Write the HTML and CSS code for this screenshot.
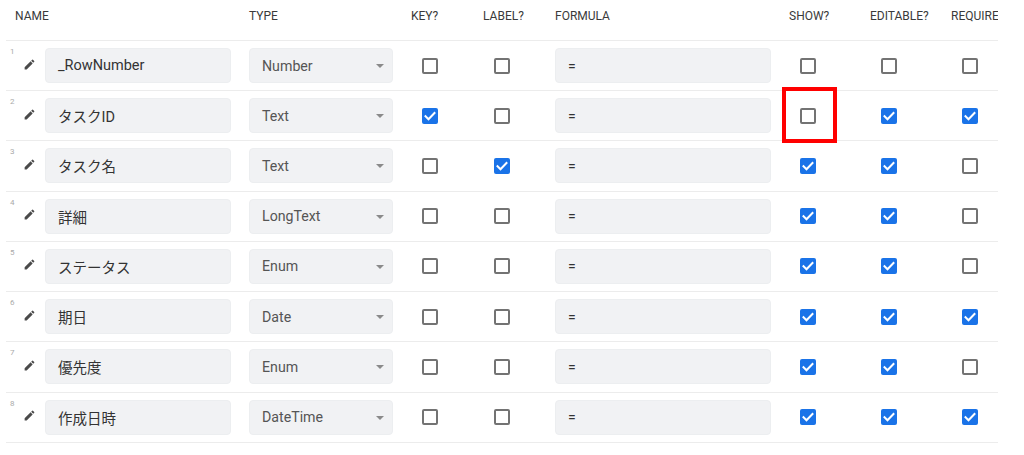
FILE: index.html
```html
<!DOCTYPE html>
<html lang="ja">
<head>
<meta charset="utf-8">
<title>Columns</title>
<link rel="stylesheet" href="styles.css">
</head>
<body>
<div class="page">
  <div class="table">
    <div class="row head">
      <div class="th">NAME</div>
      <div class="th">TYPE</div>
      <div class="th">KEY?</div>
      <div class="th">LABEL?</div>
      <div class="th">FORMULA</div>
      <div class="th">SHOW?</div>
      <div class="th">EDITABLE?</div>
      <div class="th">REQUIRE</div>
    </div>

    <div class="row">
      <div class="namecell"><span class="num">1</span><svg class="pen" viewBox="0 0 24 24"><path d="M3 17.25V21h3.75L17.81 9.94l-3.75-3.75L3 17.25zM20.71 7.04a1 1 0 0 0 0-1.41l-2.34-2.34a1 1 0 0 0-1.41 0l-1.83 1.83 3.75 3.75 1.83-1.83z"/></svg><div class="field name">_RowNumber</div></div>
      <div class="cell"><div class="field select">Number<span class="caret"></span></div></div>
      <div class="cell"><span class="cb"></span></div>
      <div class="cell"><span class="cb"></span></div>
      <div class="cell"><div class="field formula">=</div></div>
      <div class="cell"><span class="cb"></span></div>
      <div class="cell"><span class="cb"></span></div>
      <div class="cell"><span class="cb"></span></div>
    </div>

    <div class="row">
      <div class="namecell"><span class="num">2</span><svg class="pen" viewBox="0 0 24 24"><path d="M3 17.25V21h3.75L17.81 9.94l-3.75-3.75L3 17.25zM20.71 7.04a1 1 0 0 0 0-1.41l-2.34-2.34a1 1 0 0 0-1.41 0l-1.83 1.83 3.75 3.75 1.83-1.83z"/></svg><div class="field name">タスクID</div></div>
      <div class="cell"><div class="field select">Text<span class="caret"></span></div></div>
      <div class="cell"><span class="cb on"><svg viewBox="0 0 16 16"><path d="M3.5 8.2l3 3 6-6.2"/></svg></span></div>
      <div class="cell"><span class="cb"></span></div>
      <div class="cell"><div class="field formula">=</div></div>
      <div class="cell"><span class="cb"></span></div>
      <div class="cell"><span class="cb on"><svg viewBox="0 0 16 16"><path d="M3.5 8.2l3 3 6-6.2"/></svg></span></div>
      <div class="cell"><span class="cb on"><svg viewBox="0 0 16 16"><path d="M3.5 8.2l3 3 6-6.2"/></svg></span></div>
    </div>

    <div class="row">
      <div class="namecell"><span class="num">3</span><svg class="pen" viewBox="0 0 24 24"><path d="M3 17.25V21h3.75L17.81 9.94l-3.75-3.75L3 17.25zM20.71 7.04a1 1 0 0 0 0-1.41l-2.34-2.34a1 1 0 0 0-1.41 0l-1.83 1.83 3.75 3.75 1.83-1.83z"/></svg><div class="field name">タスク名</div></div>
      <div class="cell"><div class="field select">Text<span class="caret"></span></div></div>
      <div class="cell"><span class="cb"></span></div>
      <div class="cell"><span class="cb on"><svg viewBox="0 0 16 16"><path d="M3.5 8.2l3 3 6-6.2"/></svg></span></div>
      <div class="cell"><div class="field formula">=</div></div>
      <div class="cell"><span class="cb on"><svg viewBox="0 0 16 16"><path d="M3.5 8.2l3 3 6-6.2"/></svg></span></div>
      <div class="cell"><span class="cb on"><svg viewBox="0 0 16 16"><path d="M3.5 8.2l3 3 6-6.2"/></svg></span></div>
      <div class="cell"><span class="cb"></span></div>
    </div>

    <div class="row">
      <div class="namecell"><span class="num">4</span><svg class="pen" viewBox="0 0 24 24"><path d="M3 17.25V21h3.75L17.81 9.94l-3.75-3.75L3 17.25zM20.71 7.04a1 1 0 0 0 0-1.41l-2.34-2.34a1 1 0 0 0-1.41 0l-1.83 1.83 3.75 3.75 1.83-1.83z"/></svg><div class="field name">詳細</div></div>
      <div class="cell"><div class="field select">LongText<span class="caret"></span></div></div>
      <div class="cell"><span class="cb"></span></div>
      <div class="cell"><span class="cb"></span></div>
      <div class="cell"><div class="field formula">=</div></div>
      <div class="cell"><span class="cb on"><svg viewBox="0 0 16 16"><path d="M3.5 8.2l3 3 6-6.2"/></svg></span></div>
      <div class="cell"><span class="cb on"><svg viewBox="0 0 16 16"><path d="M3.5 8.2l3 3 6-6.2"/></svg></span></div>
      <div class="cell"><span class="cb"></span></div>
    </div>

    <div class="row">
      <div class="namecell"><span class="num">5</span><svg class="pen" viewBox="0 0 24 24"><path d="M3 17.25V21h3.75L17.81 9.94l-3.75-3.75L3 17.25zM20.71 7.04a1 1 0 0 0 0-1.41l-2.34-2.34a1 1 0 0 0-1.41 0l-1.83 1.83 3.75 3.75 1.83-1.83z"/></svg><div class="field name">ステータス</div></div>
      <div class="cell"><div class="field select">Enum<span class="caret"></span></div></div>
      <div class="cell"><span class="cb"></span></div>
      <div class="cell"><span class="cb"></span></div>
      <div class="cell"><div class="field formula">=</div></div>
      <div class="cell"><span class="cb on"><svg viewBox="0 0 16 16"><path d="M3.5 8.2l3 3 6-6.2"/></svg></span></div>
      <div class="cell"><span class="cb on"><svg viewBox="0 0 16 16"><path d="M3.5 8.2l3 3 6-6.2"/></svg></span></div>
      <div class="cell"><span class="cb"></span></div>
    </div>

    <div class="row">
      <div class="namecell"><span class="num">6</span><svg class="pen" viewBox="0 0 24 24"><path d="M3 17.25V21h3.75L17.81 9.94l-3.75-3.75L3 17.25zM20.71 7.04a1 1 0 0 0 0-1.41l-2.34-2.34a1 1 0 0 0-1.41 0l-1.83 1.83 3.75 3.75 1.83-1.83z"/></svg><div class="field name">期日</div></div>
      <div class="cell"><div class="field select">Date<span class="caret"></span></div></div>
      <div class="cell"><span class="cb"></span></div>
      <div class="cell"><span class="cb"></span></div>
      <div class="cell"><div class="field formula">=</div></div>
      <div class="cell"><span class="cb on"><svg viewBox="0 0 16 16"><path d="M3.5 8.2l3 3 6-6.2"/></svg></span></div>
      <div class="cell"><span class="cb on"><svg viewBox="0 0 16 16"><path d="M3.5 8.2l3 3 6-6.2"/></svg></span></div>
      <div class="cell"><span class="cb on"><svg viewBox="0 0 16 16"><path d="M3.5 8.2l3 3 6-6.2"/></svg></span></div>
    </div>

    <div class="row">
      <div class="namecell"><span class="num">7</span><svg class="pen" viewBox="0 0 24 24"><path d="M3 17.25V21h3.75L17.81 9.94l-3.75-3.75L3 17.25zM20.71 7.04a1 1 0 0 0 0-1.41l-2.34-2.34a1 1 0 0 0-1.41 0l-1.83 1.83 3.75 3.75 1.83-1.83z"/></svg><div class="field name">優先度</div></div>
      <div class="cell"><div class="field select">Enum<span class="caret"></span></div></div>
      <div class="cell"><span class="cb"></span></div>
      <div class="cell"><span class="cb"></span></div>
      <div class="cell"><div class="field formula">=</div></div>
      <div class="cell"><span class="cb on"><svg viewBox="0 0 16 16"><path d="M3.5 8.2l3 3 6-6.2"/></svg></span></div>
      <div class="cell"><span class="cb on"><svg viewBox="0 0 16 16"><path d="M3.5 8.2l3 3 6-6.2"/></svg></span></div>
      <div class="cell"><span class="cb"></span></div>
    </div>

    <div class="row">
      <div class="namecell"><span class="num">8</span><svg class="pen" viewBox="0 0 24 24"><path d="M3 17.25V21h3.75L17.81 9.94l-3.75-3.75L3 17.25zM20.71 7.04a1 1 0 0 0 0-1.41l-2.34-2.34a1 1 0 0 0-1.41 0l-1.83 1.83 3.75 3.75 1.83-1.83z"/></svg><div class="field name">作成日時</div></div>
      <div class="cell"><div class="field select">DateTime<span class="caret"></span></div></div>
      <div class="cell"><span class="cb"></span></div>
      <div class="cell"><span class="cb"></span></div>
      <div class="cell"><div class="field formula">=</div></div>
      <div class="cell"><span class="cb on"><svg viewBox="0 0 16 16"><path d="M3.5 8.2l3 3 6-6.2"/></svg></span></div>
      <div class="cell"><span class="cb on"><svg viewBox="0 0 16 16"><path d="M3.5 8.2l3 3 6-6.2"/></svg></span></div>
      <div class="cell"><span class="cb on"><svg viewBox="0 0 16 16"><path d="M3.5 8.2l3 3 6-6.2"/></svg></span></div>
    </div>
  </div>
  <div class="highlight"></div>
</div>
</body>
</html>
```

FILE: styles.css
```css
html, body {
  margin: 0;
  padding: 0;
  background: #ffffff;
}

body {
  font-family: Roboto, "Noto Sans CJK JP", "Liberation Sans", sans-serif;
  color: #333;
}

.page {
  position: relative;
  width: 1024px;
  height: 455px;
  overflow: hidden;
}

.table {
  margin-left: 6px;
  width: 992px;
  overflow: hidden;
}

.row {
  display: grid;
  grid-template-columns: 243px 162px 72px 72px 234px 81px 81px 47px;
  height: 50.25px;
  box-sizing: border-box;
  border-bottom: 1.5px solid #ececec;
  align-items: center;
}

.row.head {
  height: 35px;
  margin-bottom: 5px;
  align-items: start;
  border-bottom: none;
}

.row.head + .row {
  border-top: 1.5px solid #ececec;
  height: 51px;
}

.th {
  font-size: 12px;
  font-weight: 400;
  color: #3a3a3a;
  padding-top: 9px;
  white-space: nowrap;
}

.th:first-child {
  padding-left: 9px;
}

.namecell {
  display: flex;
  align-items: center;
  position: relative;
  height: 100%;
}

.num {
  position: absolute;
  left: 4px;
  top: 6px;
  font-size: 8px;
  color: #aaa;
}

.pen {
  width: 13px;
  height: 13px;
  margin-left: 17px;
  margin-right: 9px;
  margin-top: -3px;
  fill: #4a4a4a;
}

.field {
  background: #f1f2f4;
  border: 1px solid #eceef0;
  border-radius: 4px;
  height: 35px;
  box-sizing: border-box;
  display: flex;
  align-items: center;
  font-size: 14.5px;
  color: #333;
  position: relative;
}

.field.name {
  width: 186px;
  padding-left: 12px;
}

.field.select {
  width: 144px;
  padding-left: 12px;
  color: #555;
  font-size: 14.2px;
}

.caret {
  position: absolute;
  right: 8px;
  top: 15px;
  width: 0;
  height: 0;
  border-left: 4.5px solid transparent;
  border-right: 4.5px solid transparent;
  border-top: 4.5px solid #8a8a8a;
}

.field.formula {
  width: 216px;
  padding-left: 12px;
  font-size: 14px;
  color: #333;
}

.cell {
  display: flex;
  align-items: center;
  height: 100%;
}

.cb {
  display: block;
  width: 16px;
  height: 16px;
  box-sizing: border-box;
  border: 2px solid #737373;
  border-radius: 2px;
  margin-left: 11px;
  background: #fff;
}

.cb.on {
  border: none;
  background: #1a73e8;
}

.cb svg {
  display: block;
  width: 16px;
  height: 16px;
  fill: none;
  stroke: #fff;
  stroke-width: 2;
  stroke-linecap: square;
}

.highlight {
  position: absolute;
  left: 782px;
  top: 87px;
  width: 55px;
  height: 56px;
  box-sizing: border-box;
  border: 4px solid #ff0000;
}
```
